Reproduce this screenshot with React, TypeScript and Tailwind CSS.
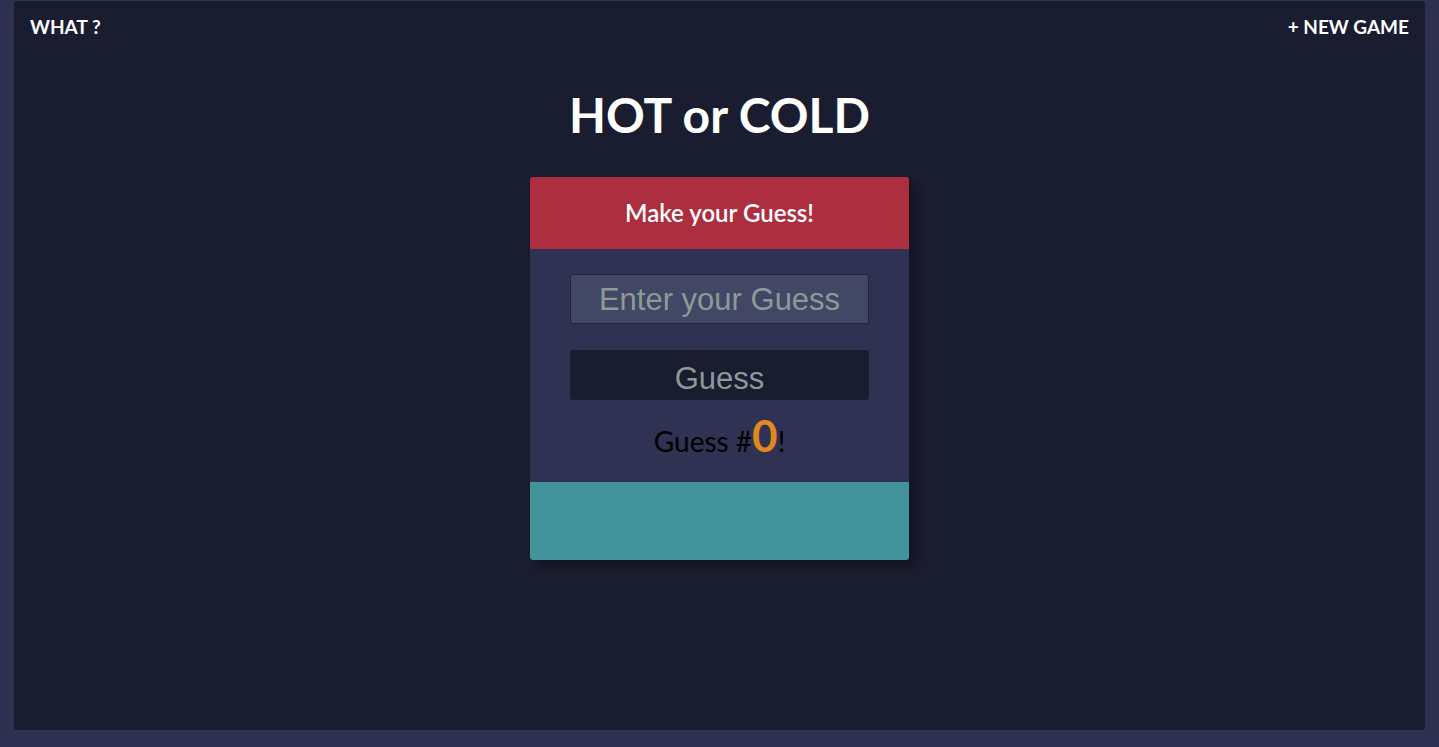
export default function App() {
  return (
    <div className="h-[747px] w-full bg-[#2e3151] px-[14px] pb-[17px] pt-px font-['Lato',sans-serif]">
      <div className="flex h-full flex-col rounded-[3px] bg-[#1a1c2f]">
        <nav className="flex items-center justify-between px-[16px] pt-[12px]">
          <a className="text-[19px] font-bold uppercase text-white">What ?</a>
          <a className="text-[19px] font-bold uppercase text-white">+ New Game</a>
        </nav>

        <h1 className="mt-[43px] text-center text-[48px] font-bold leading-[60px] text-white">
          HOT or COLD
        </h1>

        <section className="mx-auto mt-[32px] w-[379px] overflow-hidden rounded-[3px] shadow-[6px_6px_10px_rgba(0,0,0,0.3)]">
          <header className="flex h-[72px] items-center justify-center bg-[#ad2f3f]">
            <h2 className="text-[24px] font-semibold text-white">Make your Guess!</h2>
          </header>

          <div className="flex flex-col items-center bg-[#2f3252] pb-[18px] pt-[25px]">
            <input
              className="h-[50px] w-[299px] rounded-[3px] border border-[#23263b] bg-[#414765] pt-[3px] text-center font-['Liberation_Sans',sans-serif] text-[31px] text-[#8b9a98] outline-none placeholder:text-[#8b9a98]"
              placeholder="Enter your Guess"
              type="text"
            />
            <button
              className="mt-[26px] h-[50px] w-[299px] rounded-[3px] bg-[#1a1c2f] pt-[6px] font-['Liberation_Sans',sans-serif] text-[31px] text-[#8b9a98]"
              type="button"
            >
              Guess
            </button>
            <p className="mt-[12px] flex items-baseline text-[28px] leading-[46px] text-black">
              Guess #<span className="text-[44px] font-bold text-[#e08a1e]">0</span>!
            </p>
          </div>

          <div className="h-[78px] bg-[#42939a]" />
        </section>
      </div>
    </div>
  );
}
